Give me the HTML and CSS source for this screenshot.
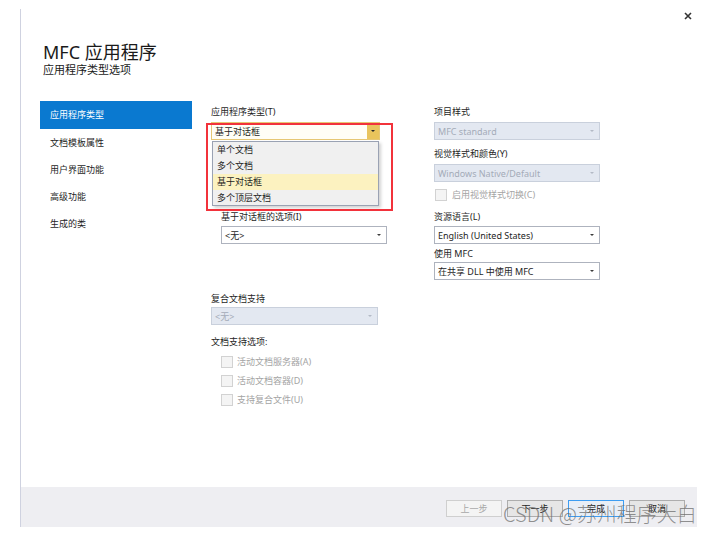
FILE: index.html
```html
<!DOCTYPE html>
<html lang="zh-CN">
<head>
<meta charset="utf-8">
<title>MFC 应用程序</title>
<link rel="stylesheet" href="styles.css">
</head>
<body>
<div class="window">
  <div class="dialog">
    <div class="head">
      <div class="titles">
        <div class="title">MFC 应用程序</div>
        <div class="subtitle">应用程序类型选项</div>
      </div>
      <div class="close">
        <svg width="8" height="8" viewBox="0 0 8 8"><path d="M1 1L7 7M7 1L1 7" stroke="#333" stroke-width="1.6"/></svg>
      </div>
    </div>
    <div class="content">
      <nav class="sidebar">
        <div class="nav-item active">应用程序类型</div>
        <div class="nav-item">文档模板属性</div>
        <div class="nav-item">用户界面功能</div>
        <div class="nav-item">高级功能</div>
        <div class="nav-item">生成的类</div>
      </nav>
      <div class="col col1">
        <div class="label l-first">应用程序类型(T)</div>
        <div class="combo-wrap">
          <div class="combo focused">
            <span>基于对话框</span>
            <span class="drop-btn"><i class="arrow dark"></i></span>
          </div>
          <div class="dropdown">
            <div class="opt">单个文档</div>
            <div class="opt">多个文档</div>
            <div class="opt sel">基于对话框</div>
            <div class="opt">多个顶层文档</div>
          </div>
        </div>
        <div class="label indent l-dlg">基于对话框的选项(I)</div>
        <div class="combo indent w166 c-dlg"><span>&lt;无&gt;</span><i class="arrow"></i></div>
        <div class="label l-compound">复合文档支持</div>
        <div class="combo disabled w167 c-compound"><span>&lt;无&gt;</span><i class="arrow light"></i></div>
        <div class="label l-docopt">文档支持选项:</div>
        <div class="check-row indent first"><span class="box"></span><span class="ctext">活动文档服务器(A)</span></div>
        <div class="check-row indent"><span class="box"></span><span class="ctext">活动文档容器(D)</span></div>
        <div class="check-row indent"><span class="box"></span><span class="ctext">支持复合文件(U)</span></div>
      </div>
      <div class="col col2">
        <div class="label l-first">项目样式</div>
        <div class="combo disabled c-a"><span>MFC standard</span><i class="arrow light"></i></div>
        <div class="label l-visual">视觉样式和颜色(Y)</div>
        <div class="combo disabled c-a"><span>Windows Native/Default</span><i class="arrow light"></i></div>
        <div class="check-row r-visual"><span class="box"></span><span class="ctext">启用视觉样式切换(C)</span></div>
        <div class="label l-lang">资源语言(L)</div>
        <div class="combo c-lang"><span>English (United States)</span><i class="arrow"></i></div>
        <div class="label l-mfc">使用 MFC</div>
        <div class="combo c-mfc"><span>在共享 DLL 中使用 MFC</span><i class="arrow"></i></div>
      </div>
    </div>
    <div class="footer">
      <div class="btn disabled">上一步</div>
      <div class="btn">下一步</div>
      <div class="btn default">完成</div>
      <div class="btn">取消</div>
    </div>
  </div>
  <div class="annot"></div>
  <div class="watermark">CSDN @苏州程序大白</div>
</div>
</body>
</html>
```
FILE: styles.css
```css
* { box-sizing: border-box; }
html, body { margin: 0; padding: 0; background: #fff; }
body {
  font-family: "Noto Sans", "Noto Sans CJK SC", sans-serif;
  color: #1e1e1e;
}
.window {
  position: relative;
  width: 708px;
  height: 535px;
  overflow: hidden;
  background: #fff;
}
.dialog {
  margin-left: 20px;
  margin-top: 9px;
  width: 677px;
  height: 518px;
  border-left: 1px solid #cfd2e0;
  display: flex;
  flex-direction: column;
}
.head {
  display: flex;
  justify-content: space-between;
  align-items: flex-start;
  height: 92px;
}
.titles { padding-left: 22px; padding-top: 32px; }
.title {
  font-size: 18px;
  line-height: 22px;
  color: #1a1a1a;
}
.subtitle {
  font-size: 11px;
  line-height: 14px;
  color: #1a1a1a;
}
.close {
  margin-top: 3px;
  margin-right: 5px;
  width: 8px;
  height: 8px;
  display: flex;
}
.content {
  flex: 1;
  display: flex;
  align-items: flex-start;
}
.sidebar {
  margin-left: 19px;
  width: 152px;
  display: flex;
  flex-direction: column;
}
.nav-item {
  height: 27px;
  line-height: 27px;
  padding-left: 10px;
  font-size: 9px;
  color: #1e1e1e;
}
.nav-item.active {
  background: #0a79d0;
  color: #fff;
  height: 28px;
  line-height: 28px;
}
.col { display: flex; flex-direction: column; align-items: flex-start; }
.col1 { margin-left: 19px; width: 170px; }
.col2 { margin-left: 53px; width: 166px; }
.label {
  font-size: 9px;
  line-height: 13px;
  height: 13px;
  color: #1e1e1e;
  white-space: nowrap;
}
.indent { margin-left: 10px; }
.l-first { margin-top: 4px; }
.combo-wrap { position: relative; width: 170px; margin-top: 4px; }
.combo {
  height: 18px;
  width: 166px;
  border: 1px solid #aeb3be;
  background: #fff;
  display: flex;
  align-items: center;
  justify-content: space-between;
  padding-left: 3px;
  padding-right: 5px;
  font-size: 9px;
  color: #1e1e1e;
  white-space: nowrap;
}
.combo.focused {
  width: 169px;
  border-color: #e6c774;
  background: #fffef6;
  padding-right: 0;
}
.drop-btn {
  width: 12px;
  height: 16px;
  background: #e9c45c;
  display: flex;
  align-items: center;
  justify-content: center;
}
.arrow {
  width: 0;
  height: 0;
  border-left: 2px solid transparent;
  border-right: 2px solid transparent;
  border-top: 2px solid #3c3c3c;
}
.arrow.light { border-top-color: #b4bac6; }
.arrow.dark { border-top-color: #2a2a2a; }
.combo.disabled {
  background: #e3e8f1;
  border-color: #c9d0dc;
  color: #a4abb8;
}
.dropdown {
  position: absolute;
  top: 19px;
  left: 1px;
  width: 167px;
  height: 65px;
  background: #f0f0f0;
  border: 1px solid #9aa2b3;
  box-shadow: 2px 2px 3px rgba(0,0,0,0.18);
}
.opt {
  height: 16px;
  line-height: 16px;
  padding-left: 4px;
  font-size: 9px;
  color: #1e1e1e;
}
.opt.sel { background: #fcf2c0; }
.l-dlg { margin-top: 70px; }
.c-dlg { margin-top: 3px; }
.w166 { width: 166px; }
.w167 { width: 167px; }
.l-compound { margin-top: 48px; }
.c-compound { margin-top: 2px; }
.l-docopt { margin-top: 10px; }
.check-row {
  display: flex;
  align-items: center;
  height: 19px;
  font-size: 9px;
  color: #a4a4a4;
  white-space: nowrap;
}
.check-row.first { margin-top: 4px; }
.box {
  width: 12px;
  height: 12px;
  border: 1px solid #d2d2d2;
  background: #f4f4f4;
  margin-right: 4px;
}
.c-a { margin-top: 4px; }
.l-visual { margin-top: 7px; }
.r-visual { margin-top: 3px; }
.r-visual .box { margin-left: 1px; margin-right: 5px; }
.l-lang { margin-top: 6px; }
.c-lang { margin-top: 3px; }
.l-mfc { margin-top: 3px; }
.c-mfc { margin-top: 2px; }
.footer {
  height: 40px;
  background: #eeeef2;
  display: flex;
  justify-content: flex-end;
  align-items: flex-start;
  padding-top: 13px;
  padding-right: 12px;
  gap: 5px;
}
.btn {
  width: 56px;
  height: 17px;
  border: 1px solid #adadad;
  background: #e6e6e6;
  font-size: 9px;
  line-height: 15px;
  text-align: center;
  color: #1e1e1e;
}
.btn.disabled {
  border-color: #cfcfcf;
  background: #f4f4f4;
  color: #a8a8a8;
}
.btn.default {
  border-color: #3d9df2;
  background: #e8eef6;
}
.annot {
  position: absolute;
  left: 206px;
  top: 123px;
  width: 187px;
  height: 88px;
  border: 2px solid #f2323b;
  pointer-events: none;
}
.watermark {
  position: absolute;
  left: 503px;
  top: 500px;
  font-family: "Noto Sans CJK SC", sans-serif;
  font-size: 20px;
  line-height: 27px;
  font-weight: 300;
  color: rgba(110, 110, 110, 0.75);
  white-space: nowrap;
}
```
